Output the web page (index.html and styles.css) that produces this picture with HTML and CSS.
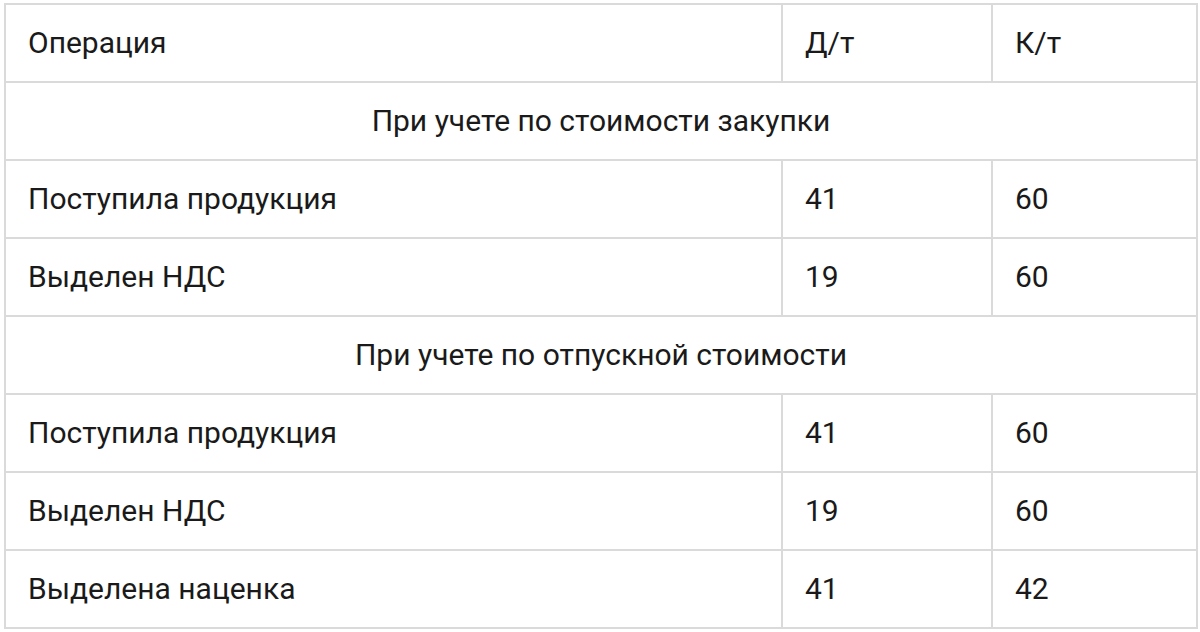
FILE: index.html
```html
<!DOCTYPE html>
<html lang="ru">
<head>
<meta charset="utf-8">
<link rel="stylesheet" href="styles.css">
</head>
<body>
<table class="ledger">
  <colgroup>
    <col class="c-op">
    <col class="c-dt">
    <col class="c-kt">
  </colgroup>
  <tr><td>Операция</td><td>Д/т</td><td>К/т</td></tr>
  <tr><td class="section" colspan="3">При учете по стоимости закупки</td></tr>
  <tr><td>Поступила продукция</td><td>41</td><td>60</td></tr>
  <tr><td>Выделен НДС</td><td>19</td><td>60</td></tr>
  <tr><td class="section" colspan="3">При учете по отпускной стоимости</td></tr>
  <tr><td>Поступила продукция</td><td>41</td><td>60</td></tr>
  <tr><td>Выделен НДС</td><td>19</td><td>60</td></tr>
  <tr><td>Выделена наценка</td><td>41</td><td>42</td></tr>
</table>
</body>
</html>
```
FILE: styles.css
```css
html, body {
  margin: 0;
  padding: 0;
  background: #fff;
}
body {
  padding: 3px 4px;
  font-family: Roboto, "Noto Sans", sans-serif;
  color: #1a1a1a;
}
.ledger {
  width: 1192px;
  border-collapse: collapse;
  table-layout: fixed;
  font-size: 30px;
}
.c-op { width: 777px; }
.c-dt { width: 210px; }
.c-kt { width: 205px; }
.ledger td {
  border: 2px solid #dadada;
  height: 76px;
  padding: 0 0 0 22px;
  vertical-align: middle;
  line-height: 34px;
}
.ledger td.section {
  text-align: center;
  padding-left: 0;
}
```
